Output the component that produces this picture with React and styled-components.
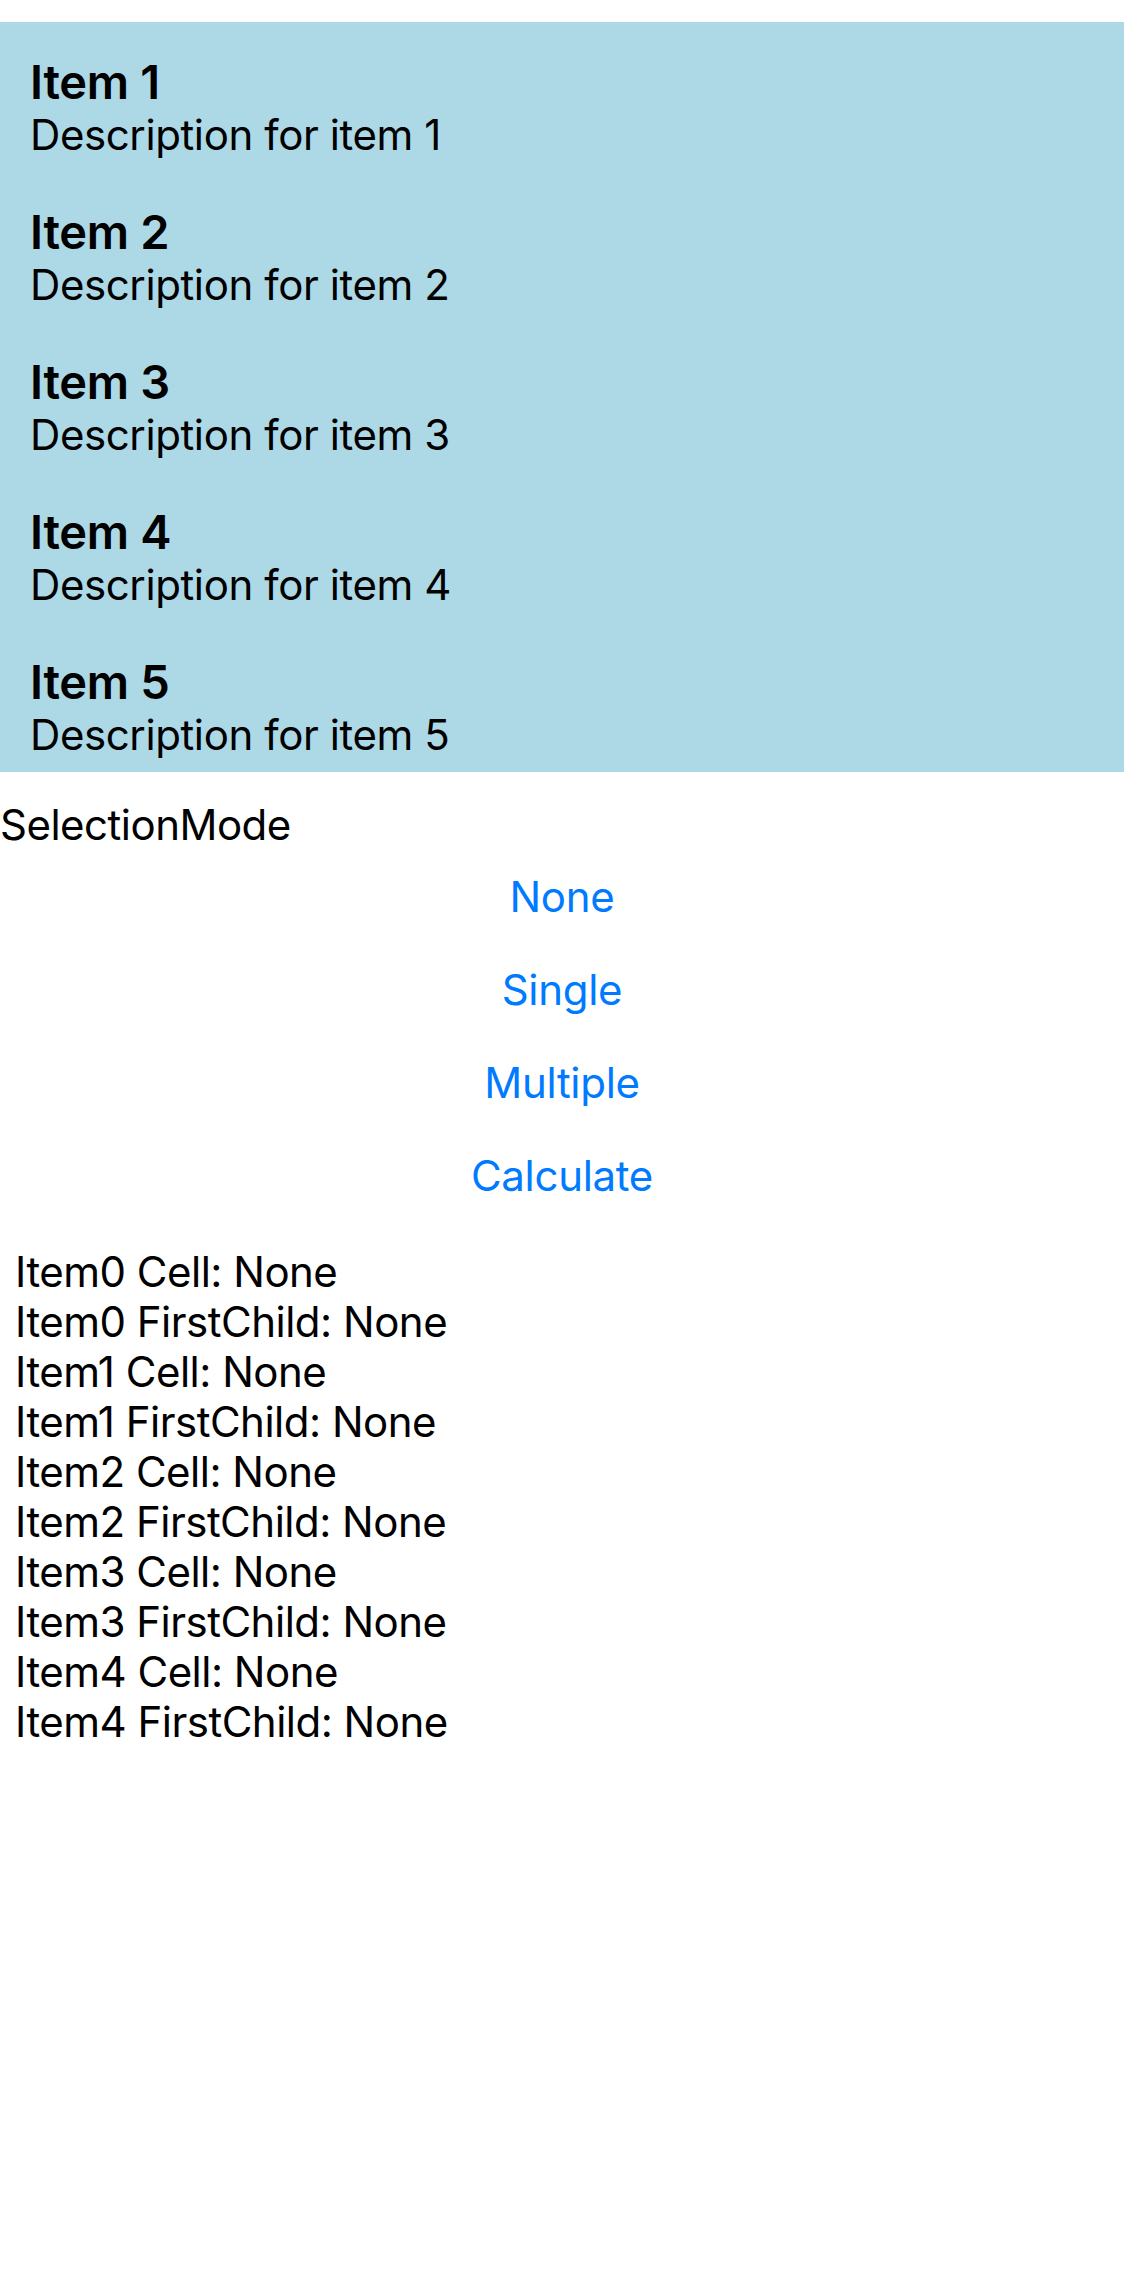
import React from 'react';
import styled, { createGlobalStyle } from 'styled-components';

const GlobalStyle = createGlobalStyle`
  body {
    margin: 0;
    background: #ffffff;
    font-family: Inter, "Noto Sans", "Liberation Sans", sans-serif;
    color: #000000;
  }
`;

const items = [1, 2, 3, 4, 5];
const buttons = ['None', 'Single', 'Multiple', 'Calculate'];

const App = () => {
  const lines = [];
  for (let i = 0; i < 5; i++) {
    lines.push(`Item${i} Cell: None`);
    lines.push(`Item${i} FirstChild: None`);
  }

  return (
    <Page>
      <GlobalStyle />
      <List>
        {items.map((n) => (
          <ListItem key={n}>
            <ItemTitle>Item {n}</ItemTitle>
            <ItemDescription>Description for item {n}</ItemDescription>
          </ListItem>
        ))}
      </List>
      <ModeLabel>SelectionMode</ModeLabel>
      <ButtonStack>
        {buttons.map((b) => (
          <LinkButton key={b}>{b}</LinkButton>
        ))}
      </ButtonStack>
      <Output>
        {lines.map((l) => (
          <OutputLine key={l}>{l}</OutputLine>
        ))}
      </Output>
    </Page>
  );
};

export default App;

const Page = styled.div`
  padding-top: 22px;
  min-height: 2264px;
  display: flex;
  flex-direction: column;
`;

const List = styled.div`
  background-color: #add8e6;
  display: flex;
  flex-direction: column;
`;

const ListItem = styled.div`
  height: 150px;
  box-sizing: border-box;
  padding: 32px 30px 0 30px;
`;

const ItemTitle = styled.div`
  font-size: 47px;
  font-weight: 600;
  line-height: 56px;
  letter-spacing: -0.3px;
`;

const ItemDescription = styled.div`
  font-size: 42px;
  line-height: 50px;
  letter-spacing: -0.4px;
`;

const ModeLabel = styled.div`
  margin-top: 28px;
  font-size: 42px;
  line-height: 50px;
  letter-spacing: -0.5px;
`;

const ButtonStack = styled.div`
  display: flex;
  flex-direction: column;
  align-items: center;
`;

const LinkButton = styled.button`
  background: none;
  border: none;
  padding: 0;
  height: 93px;
  width: 100%;
  font-family: inherit;
  font-size: 42px;
  line-height: 93px;
  letter-spacing: -0.3px;
  color: #007aff;
  cursor: pointer;
`;

const Output = styled.div`
  margin-top: 25px;
  padding: 0 15px;
  display: flex;
  flex-direction: column;
`;

const OutputLine = styled.div`
  font-size: 42px;
  line-height: 50px;
  letter-spacing: -0.5px;
`;
